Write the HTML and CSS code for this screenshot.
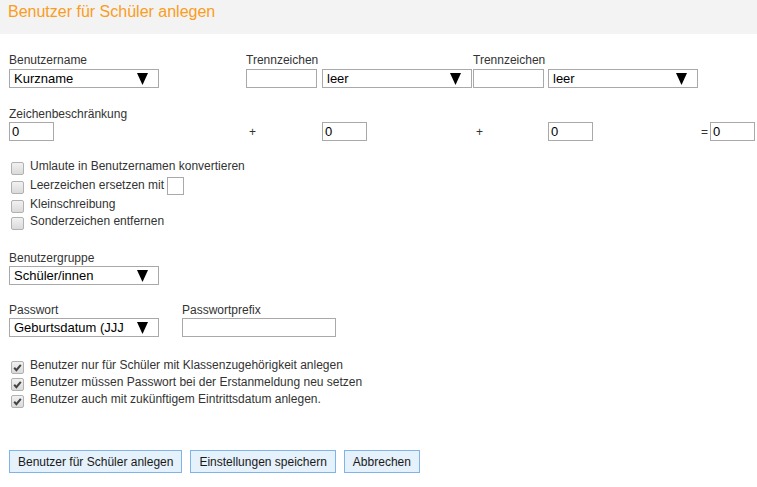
FILE: index.html
```html
<!DOCTYPE html>
<html lang="de">
<head>
<meta charset="UTF-8">
<meta name="viewport" content="width=device-width, initial-scale=1.0">
<link rel="stylesheet" href="styles.css">
<title>Benutzer für Schüler anlegen</title>
</head>
<body>
  <div class="header">
    <h1>Benutzer für Schüler anlegen</h1>
  </div>

  <div class="content">
    <div class="name-grid">
      <div class="lbl">Benutzername</div>
      <div class="lbl span2">Trennzeichen</div>
      <div class="lbl span2">Trennzeichen</div>
      <div></div>

      <div class="select"><span class="select-text">Kurzname</span><svg class="arrow" width="11" height="12" viewBox="0 0 11 12"><polygon points="0,0 11,0 5.5,12" /></svg></div>
      <input type="text" class="sep">
      <div class="select"><span class="select-text">leer</span><svg class="arrow" width="11" height="12" viewBox="0 0 11 12"><polygon points="0,0 11,0 5.5,12" /></svg></div>
      <input type="text" class="sep">
      <div class="select"><span class="select-text">leer</span><svg class="arrow" width="11" height="12" viewBox="0 0 11 12"><polygon points="0,0 11,0 5.5,12" /></svg></div>
      <div></div>

      <div class="lbl full second">Zeichenbeschränkung</div>

      <input type="text" class="num" value="0">
      <span class="op">+</span>
      <input type="text" class="num" value="0">
      <span class="op">+</span>
      <input type="text" class="num" value="0">
      <span class="eq">=<input type="text" class="num" value="0"></span>
    </div>

    <div class="checks">
      <div class="check-row"><span class="cb"></span>Umlaute in Benutzernamen konvertieren</div>
      <div class="check-row tall"><span class="cb"></span>Leerzeichen ersetzen mit<input type="text" class="tiny"></div>
      <div class="check-row"><span class="cb"></span>Kleinschreibung</div>
      <div class="check-row"><span class="cb"></span>Sonderzeichen entfernen</div>
    </div>

    <div class="field group">
      <div class="lbl">Benutzergruppe</div>
      <div class="select"><span class="select-text">Schüler/innen</span><svg class="arrow" width="11" height="12" viewBox="0 0 11 12"><polygon points="0,0 11,0 5.5,12" /></svg></div>
    </div>

    <div class="pw-row">
      <div class="field">
        <div class="lbl">Passwort</div>
        <div class="select"><span class="select-text clip">Geburtsdatum (JJJJMMTT)</span><svg class="arrow" width="11" height="12" viewBox="0 0 11 12"><polygon points="0,0 11,0 5.5,12" /></svg></div>
      </div>
      <div class="field">
        <div class="lbl">Passwortprefix</div>
        <input type="text" class="prefix">
      </div>
    </div>

    <div class="checks checked">
      <div class="check-row"><span class="cb on"><svg width="13" height="13" viewBox="0 0 13 13"><path d="M3.2 6.8 L5.4 9.2 L9.8 3.8" /></svg></span>Benutzer nur für Schüler mit Klassenzugehörigkeit anlegen</div>
      <div class="check-row"><span class="cb on"><svg width="13" height="13" viewBox="0 0 13 13"><path d="M3.2 6.8 L5.4 9.2 L9.8 3.8" /></svg></span>Benutzer müssen Passwort bei der Erstanmeldung neu setzen</div>
      <div class="check-row"><span class="cb on"><svg width="13" height="13" viewBox="0 0 13 13"><path d="M3.2 6.8 L5.4 9.2 L9.8 3.8" /></svg></span>Benutzer auch mit zukünftigem Eintrittsdatum anlegen.</div>
    </div>

    <div class="buttons">
      <button>Benutzer für Schüler anlegen</button>
      <button>Einstellungen speichern</button>
      <button>Abbrechen</button>
    </div>
  </div>
</body>
</html>
```

FILE: styles.css
```css
body {
  margin: 0;
  padding: 0;
  background-color: #fff;
  color: #333;
  font-family: "Liberation Sans", Arial, sans-serif;
  font-size: 12px;
}

.header {
  height: 34px;
  background-color: #f3f3f3;
  padding: 2px 8px 0;
  box-sizing: border-box;
}

.header h1 {
  margin: 0;
  font-size: 16px;
  font-weight: normal;
  line-height: 19px;
  color: #fa9d1c;
}

.content {
  padding-left: 9px;
}

.lbl {
  line-height: 16px;
  margin-bottom: 1px;
}

/* Benutzername / Trennzeichen / Zeichenbeschränkung */
.name-grid {
  display: grid;
  grid-template-columns: 237px 76px 151px 75px 153px 56px;
  margin-top: 18px;
  align-items: center;
}

.span2 {
  grid-column: span 2;
}

.full {
  grid-column: 1 / -1;
}

.second {
  margin-top: 18px;
  margin-bottom: 0;
}

.select {
  display: flex;
  align-items: center;
  justify-content: space-between;
  box-sizing: border-box;
  width: 150px;
  height: 19px;
  border: 1px solid #a9a9a9;
  padding: 0 10px 0 4px;
  background-color: #fff;
  color: #000;
  font-size: 13px;
  line-height: 17px;
}

.select-text {
  white-space: nowrap;
  overflow: hidden;
}

.select-text.clip {
  width: 110px;
}

.arrow {
  flex: none;
  fill: #000;
  margin-top: 1px;
}

input[type="text"] {
  box-sizing: border-box;
  height: 19px;
  margin: 0;
  border: 1px solid #a9a9a9;
  padding: 0 2px;
  font-family: "Liberation Sans", Arial, sans-serif;
  font-size: 13px;
  color: #000;
  background-color: #fff;
}

.sep {
  width: 71px;
}

.num {
  width: 45px;
}

.op {
  padding-left: 3px;
}

.eq {
  display: flex;
  align-items: center;
}

.eq input {
  margin-left: 2px;
}

/* Checkboxen */
.checks {
  margin-top: 17px;
}

.check-row {
  display: flex;
  align-items: center;
  height: 17px;
  line-height: 17px;
}

.check-row.tall {
  height: 21px;
}

.cb {
  flex: none;
  box-sizing: border-box;
  width: 13px;
  height: 13px;
  margin: 3px 6px 0 2px;
  border: 1px solid #b1b1b1;
  border-radius: 2px;
  background: linear-gradient(#f1f1f1, #dadada);
}

.cb svg {
  display: block;
  margin: -1px;
}

.cb svg path {
  fill: none;
  stroke: #444;
  stroke-width: 2;
}

.tiny {
  width: 17px;
  height: 18px !important;
  margin-left: 3px !important;
}

.checked {
  margin-top: 20px;
}

.field .lbl {
  margin-bottom: 0;
}

.group {
  margin-top: 20px;
}

.pw-row {
  display: grid;
  grid-template-columns: 173px 154px;
  margin-top: 17px;
}

.prefix {
  width: 154px;
}

/* Buttons */
.buttons {
  display: flex;
  gap: 8px;
  margin-top: 42px;
}

.buttons button {
  box-sizing: border-box;
  height: 23px;
  padding: 0 8px;
  border: 1px solid #7eb4ea;
  border-radius: 0;
  background-color: #e5f1fb;
  color: #1a1a1a;
  font-family: "Liberation Sans", Arial, sans-serif;
  font-size: 12px;
  cursor: pointer;
}

.buttons button:hover {
  background-color: #cce4f7;
}
```
